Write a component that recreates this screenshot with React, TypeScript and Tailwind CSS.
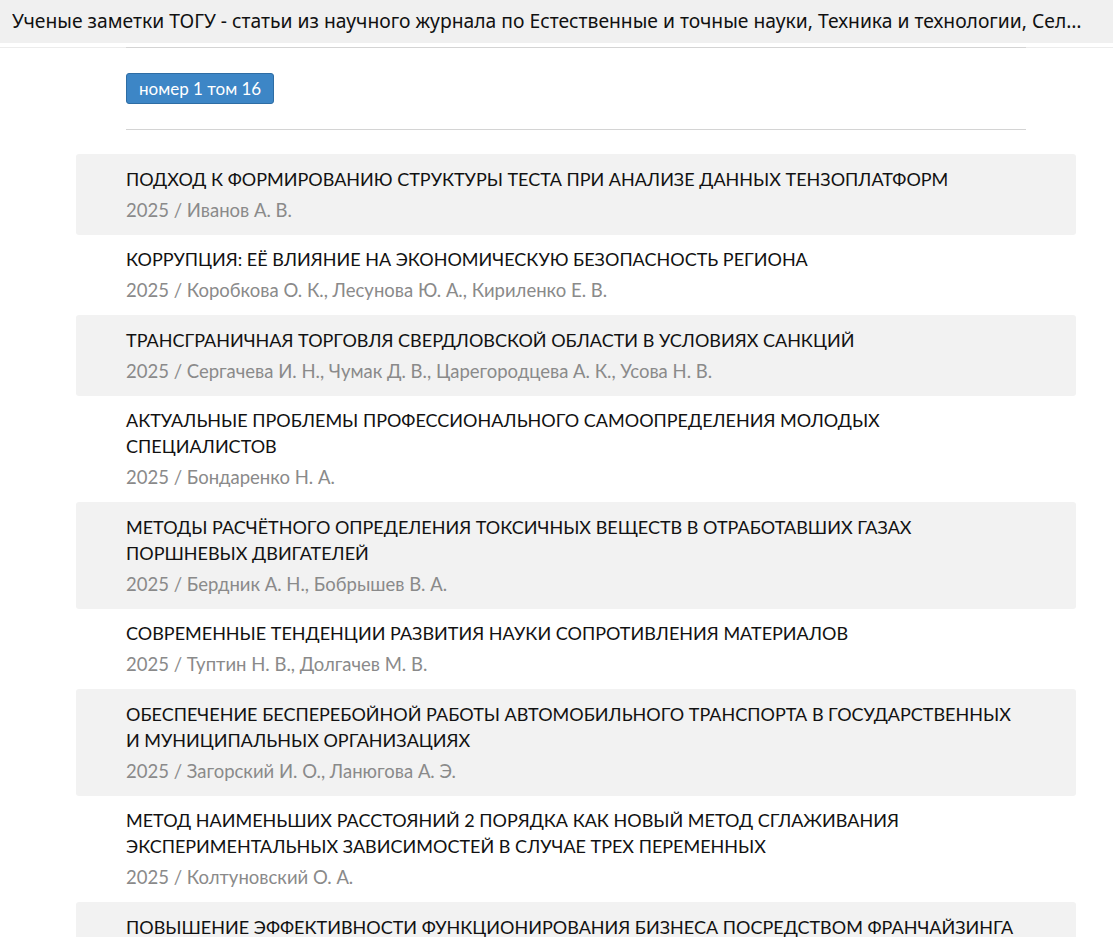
import React from 'react';

type Article = {
  title: string;
  authors: string;
};

const articles: Article[] = [
  { title: 'Подход к формированию структуры теста при анализе данных тензоплатформ', authors: 'Иванов А. В.' },
  { title: 'Коррупция: её влияние на экономическую безопасность региона', authors: 'Коробкова О. К., Лесунова Ю. А., Кириленко Е. В.' },
  { title: 'Трансграничная торговля Свердловской области в условиях санкций', authors: 'Сергачева И. Н., Чумак Д. В., Царегородцева А. К., Усова Н. В.' },
  { title: 'Актуальные проблемы профессионального самоопределения молодых специалистов', authors: 'Бондаренко Н. А.' },
  { title: 'Методы расчётного определения токсичных веществ в отработавших газах поршневых двигателей', authors: 'Бердник А. Н., Бобрышев В. А.' },
  { title: 'Современные тенденции развития науки сопротивления материалов', authors: 'Туптин Н. В., Долгачев М. В.' },
  { title: 'Обеспечение бесперебойной работы автомобильного транспорта в государственных и муниципальных организациях', authors: 'Загорский И. О., Ланюгова А. Э.' },
  { title: 'Метод наименьших расстояний 2 порядка как новый метод сглаживания экспериментальных зависимостей в случае трех переменных', authors: 'Колтуновский О. А.' },
  { title: 'Повышение эффективности функционирования бизнеса посредством франчайзинга', authors: 'Иванова Е. А.' },
];

export default function App() {
  return (
    <div className="min-h-screen bg-white font-['Lato','Noto_Sans',sans-serif]">
      {/* Tab title bar */}
      <div className="h-[43px] bg-[#f0f0f0] flex items-center pl-3 pr-[29px]">
        <p className="truncate text-[19.3px] text-[#111] font-['Noto_Sans','Open_Sans',sans-serif]">
          Ученые заметки ТОГУ - статьи из научного журнала по Естественные и точные науки, Техника и технологии, Сельское хозяйство
        </p>
      </div>

      <div className="mt-[4px] border-t border-[#ececec]" />
      <div className="w-[900px] ml-[126px] -mt-px border-t border-[#d4d4d4]" />

      {/* Issue selector */}
      <div className="ml-[126px] pt-[25px] pb-[25px]">
        <button className="h-[31px] px-[12px] rounded-[3px] bg-[#3d86c6] border border-[#2e6da4] text-white text-[17px] leading-none">
          номер 1 том 16
        </button>
      </div>

      <div className="w-[900px] ml-[126px] border-t border-[#d4d4d4]" />

      {/* Article list */}
      <div className="ml-[76px] w-[1000px] mt-[24px] flex flex-col">
        {articles.map((a, i) => (
          <div
            key={i}
            className={`pl-[50px] pr-[60px] pt-[11.5px] pb-[12px] rounded-[3px] ${i % 2 === 0 ? 'bg-[#f2f2f2]' : 'bg-white'}`}
          >
            <div className="text-[18px] leading-[26px] uppercase text-[#111] mb-[5px]">
              {a.title}
            </div>
            <div className="text-[18.5px] leading-[26px] text-[#8a8a8a]">
              2025 / {a.authors}
            </div>
          </div>
        ))}
      </div>
    </div>
  );
}
